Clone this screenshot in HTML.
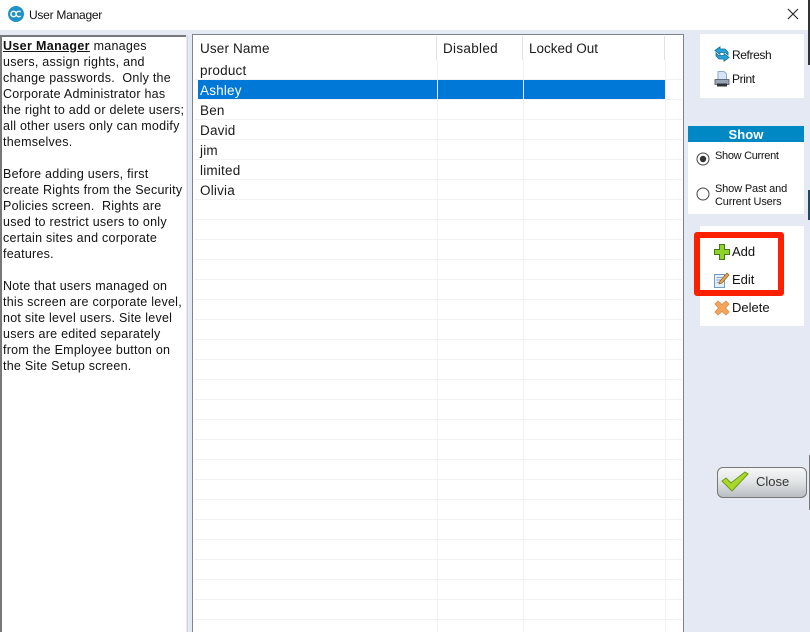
<!DOCTYPE html>
<html><head><meta charset="utf-8">
<style>
html,body{margin:0;padding:0;width:810px;height:632px;overflow:hidden;background:#e5e9f3;font-family:"Liberation Sans",sans-serif;color:#111}
.a{position:absolute;white-space:nowrap}
.l{position:absolute;left:3px;font-size:12.5px;letter-spacing:.25px;line-height:16px;white-space:pre;color:#111}
.g{position:absolute;left:200px;font-size:13.5px;line-height:20px;color:#1a1a1a;letter-spacing:.2px}
.h{position:absolute;top:39px;font-size:13.5px;line-height:20px;color:#1a1a1a;letter-spacing:.15px}
.b{position:absolute;font-size:13px;line-height:16px;color:#111}
.rl{position:absolute;left:194px;width:488px;height:1px;background:#f2f2f2}
.cl{position:absolute;width:1px;background:#f2f2f2;top:60px;height:572px}
.ch{position:absolute;width:1px;background:#e2e2e2;top:36px;height:24px}
</style></head><body>
<div class="a" style="left:0;top:0;width:810px;height:30px;background:#fff"></div>
<svg class="a" style="left:8px;top:6px" width="16" height="16" viewBox="0 0 16 16"><circle cx="8" cy="8" r="8" fill="#1f93c8"/><circle cx="5.600" cy="8" r="2.700" fill="none" stroke="#fff" stroke-width="1.400"/><path d="M12.600 6a2.700 2.700 0 1 0 0 4" fill="none" stroke="#fff" stroke-width="1.400"/></svg>
<div class="a" style="left:29px;top:7px;font-size:12px;letter-spacing:-.25px;line-height:16px;color:#111">User Manager</div>
<svg class="a" style="left:787px;top:8px" width="12" height="12" viewBox="0 0 12 12"><path d="M1 1L11 11M11 1L1 11" stroke="#222" stroke-width="1.100"/></svg>
<div class="a" style="left:808px;top:0;width:2px;height:65px;background:#333"></div>
<div class="a" style="left:808px;top:190px;width:2px;height:30px;background:#1f4a66"></div>
<div class="a" style="left:809px;top:455px;width:1px;height:55px;background:#777"></div>

<!-- left panel -->
<div class="a" style="left:0;top:35px;width:186px;height:597px;background:#fff;border-top:2px solid #77787c;border-left:2px solid #77787c;box-sizing:border-box"></div>
<div class="a" style="left:187px;top:35px;width:1px;height:597px;background:#d8d8d8"></div>
<div class="l" style="top:38px"><b style="text-decoration:underline;letter-spacing:.35px">User Manager</b> manages</div>
<div class="l" style="top:54px">users, assign rights, and</div>
<div class="l" style="top:70px">change passwords.  Only the</div>
<div class="l" style="top:86px">Corporate Administrator has</div>
<div class="l" style="top:102px">the right to add or delete users;</div>
<div class="l" style="top:118px">all other users only can modify</div>
<div class="l" style="top:134px">themselves.</div>
<div class="l" style="top:166px">Before adding users, first</div>
<div class="l" style="top:182px">create Rights from the Security</div>
<div class="l" style="top:198px">Policies screen.  Rights are</div>
<div class="l" style="top:214px">used to restrict users to only</div>
<div class="l" style="top:230px">certain sites and corporate</div>
<div class="l" style="top:246px">features.</div>
<div class="l" style="top:278px">Note that users managed on</div>
<div class="l" style="top:294px">this screen are corporate level,</div>
<div class="l" style="top:310px">not site level users. Site level</div>
<div class="l" style="top:326px">users are edited separately</div>
<div class="l" style="top:342px">from the Employee button on</div>
<div class="l" style="top:358px">the Site Setup screen.</div>

<!-- grid -->
<div class="a" style="left:192px;top:34px;width:492px;height:598px;background:#fff;border:solid #80838f;border-width:1px 1px 0 1px;box-sizing:border-box"></div>
<div class="rl" style="top:79px"></div><div class="rl" style="top:99px"></div><div class="rl" style="top:119px"></div><div class="rl" style="top:139px"></div><div class="rl" style="top:159px"></div><div class="rl" style="top:179px"></div><div class="rl" style="top:199px"></div><div class="rl" style="top:219px"></div><div class="rl" style="top:239px"></div><div class="rl" style="top:259px"></div><div class="rl" style="top:279px"></div><div class="rl" style="top:299px"></div><div class="rl" style="top:319px"></div><div class="rl" style="top:339px"></div><div class="rl" style="top:359px"></div><div class="rl" style="top:379px"></div><div class="rl" style="top:399px"></div><div class="rl" style="top:419px"></div><div class="rl" style="top:439px"></div><div class="rl" style="top:459px"></div><div class="rl" style="top:479px"></div><div class="rl" style="top:499px"></div><div class="rl" style="top:519px"></div><div class="rl" style="top:539px"></div><div class="rl" style="top:559px"></div><div class="rl" style="top:579px"></div><div class="rl" style="top:599px"></div><div class="rl" style="top:619px"></div>
<div class="cl" style="left:437px"></div><div class="cl" style="left:523px"></div><div class="cl" style="left:665px"></div>
<div class="ch" style="left:436px"></div><div class="ch" style="left:522px"></div><div class="ch" style="left:664px"></div>
<div class="a" style="left:198px;top:80px;width:467px;height:19px;background:#0078d7"></div>
<div class="a" style="left:437px;top:80px;width:1px;height:19px;background:#e8f0f8"></div>
<div class="a" style="left:523px;top:80px;width:1px;height:19px;background:#e8f0f8"></div>
<div class="h" style="left:200px">User Name</div>
<div class="h" style="left:443px;letter-spacing:.3px">Disabled</div>
<div class="h" style="left:529px;letter-spacing:0">Locked Out</div>
<div class="g" style="top:61px">product</div>
<div class="g" style="top:81px;color:#fff">Ashley</div>
<div class="g" style="top:101px">Ben</div>
<div class="g" style="top:121px">David</div>
<div class="g" style="top:141px">jim</div>
<div class="g" style="top:161px">limited</div>
<div class="g" style="top:181px">Olivia</div>

<!-- refresh/print -->
<div class="a" style="left:700px;top:34px;width:104px;height:64px;background:#fff"></div>
<svg class="a" style="left:714px;top:46px" width="16" height="16" viewBox="0 0 16 16"><path d="M1 4.500L6 .8V3h5l3 3v3l-2.500-2.500H6v2z" fill="#29a3d6" stroke="#0f6f9e" stroke-width=".8"/><path transform="rotate(180 8 8)" d="M1 4.500L6 .8V3h5l3 3v3l-2.500-2.500H6v2z" fill="#29a3d6" stroke="#0f6f9e" stroke-width=".8"/></svg>
<div class="b" style="left:732px;top:47px;font-size:12px;letter-spacing:-.4px">Refresh</div>
<svg class="a" style="left:714px;top:71px" width="16" height="16" viewBox="0 0 16 16"><path d="M4 .5h6l2.500 2.500v7H4z" fill="#d6e6f6" stroke="#6f93bd" stroke-width=".8"/><path d="M1 8.500h14v5H1z" fill="#9aa6b5" stroke="#4a5260" stroke-width=".8"/><path d="M3 12.500h10v3H3z" fill="#2c333d"/></svg>
<div class="b" style="left:732px;top:71px;font-size:12px;letter-spacing:-.4px">Print</div>

<!-- show -->
<div class="a" style="left:688px;top:126px;width:116px;height:88px;background:#fff"></div>
<div class="a" style="left:688px;top:126px;width:116px;height:16px;background:#0088c4;color:#fff;font-weight:bold;font-size:13px;letter-spacing:.1px;line-height:17px;text-align:center">Show</div>
<svg class="a" style="left:696px;top:152px" width="14" height="14" viewBox="0 0 14 14"><circle cx="7" cy="7" r="6" fill="#fff" stroke="#444"/><circle cx="7" cy="7" r="3.200" fill="#333"/></svg>
<div class="b" style="left:715px;top:149px;font-size:11px;letter-spacing:-.3px;line-height:14px">Show Current</div>
<svg class="a" style="left:696px;top:187px" width="14" height="14" viewBox="0 0 14 14"><circle cx="7" cy="7" r="6" fill="#fff" stroke="#444"/></svg>
<div class="b" style="left:715px;top:183px;font-size:11px;letter-spacing:-.15px;line-height:13px">Show Past and<br>Current Users</div>

<!-- actions -->
<div class="a" style="left:700px;top:226px;width:104px;height:100px;background:#fff"></div>
<div class="a" style="left:694px;top:232px;width:90px;height:64px;box-sizing:border-box;border:6px solid #fb2000;border-radius:3px"></div>
<svg class="a" style="left:714px;top:244px" width="16" height="16" viewBox="0 0 16 16"><path d="M5.500 .5h5v5h5v5h-5v5h-5v-5h-5v-5h5z" fill="#8fd32a" stroke="#3f7a12"/></svg>
<div class="b" style="left:732px;top:244px">Add</div>
<svg class="a" style="left:714px;top:272px" width="16" height="16" viewBox="0 0 16 16"><path d="M.5 2.500h10v13H.5z" fill="#e4f0fb" stroke="#6f9ccc"/><path d="M2.500 5.500h6M2.500 8h4M2.500 10.500h3" stroke="#8aa8c8"/><path d="M5 12l1-3 7-8 2 2-7 8z" fill="#e9a94a" stroke="#8a5a20" stroke-width=".7"/></svg>
<div class="b" style="left:732px;top:272px">Edit</div>
<svg class="a" style="left:714px;top:300px" width="16" height="16" viewBox="0 0 16 16"><path d="M4 1l4 3.500L12 1l3 3-3.500 4 3.500 4-3 3-4-3.500L4 15l-3-3 3.500-4L1 4z" fill="#f3a55e" stroke="#d78b43" stroke-width=".8"/></svg>
<div class="b" style="left:732px;top:300px">Delete</div>

<!-- close -->
<div class="a" style="left:717px;top:467px;width:90px;height:31px;box-sizing:border-box;border:1px solid #777;border-radius:6px;background:linear-gradient(#f6f7f7,#e3e6e7 45%,#b9bec2)"></div>
<svg class="a" style="left:721px;top:471px" width="28" height="21" viewBox="0 0 28 21"><path d="M1 10l4-3 5 5L24 1l3 2L11 20z" fill="#a8d92a" stroke="#6f9a18"/></svg>
<div class="b" style="left:756px;top:474px;color:#333">Close</div>
</body></html>
